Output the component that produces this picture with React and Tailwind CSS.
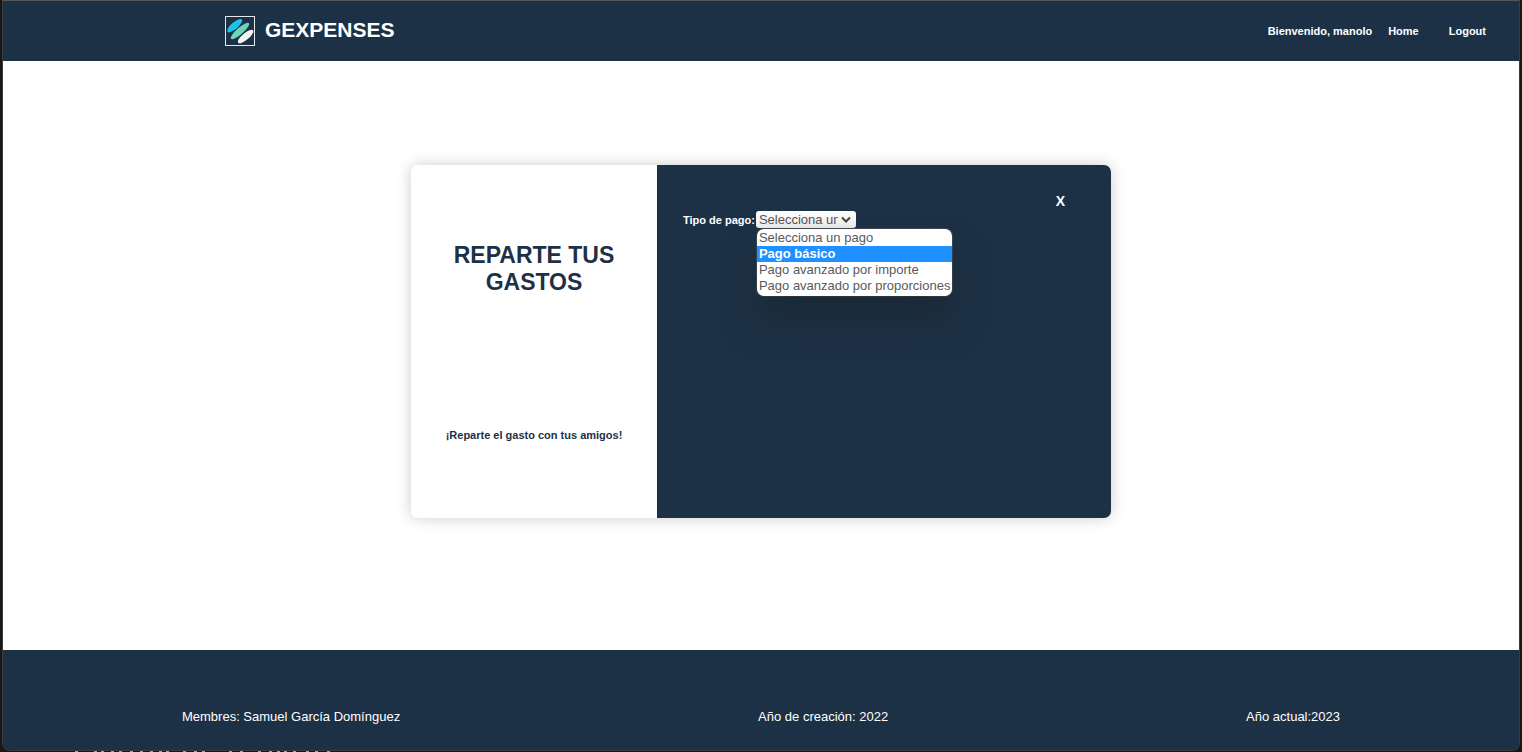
const options = [
  'Selecciona un pago',
  'Pago básico',
  'Pago avanzado por importe',
  'Pago avanzado por proporciones',
];

function Logo() {
  return (
    <svg width="30" height="30" viewBox="0 0 30 30" aria-hidden="true">
      <rect x="0.5" y="0.5" width="29" height="29" fill="none" stroke="#e3e8ec" />
      <ellipse cx="9.7" cy="9.6" rx="9.5" ry="3.3" fill="#1bc4ea" transform="rotate(-40 9.7 9.6)" />
      <ellipse cx="15" cy="15" rx="11.8" ry="3.3" fill="#6fd3b8" transform="rotate(-41 15 15)" />
      <ellipse cx="20.6" cy="20.5" rx="9.7" ry="3.3" fill="#f4f5f3" transform="rotate(-40 20.6 20.5)" />
    </svg>
  );
}

function Header() {
  return (
    <header className="flex h-[60px] items-center justify-between bg-[#1d3146] pr-[33px] pl-[222px] text-white">
      <a href="#" className="flex items-start gap-2.5">
        <Logo />
        <span className="text-[21px] leading-7 font-bold">GEXPENSES</span>
      </a>
      <nav className="flex items-center text-[11px] leading-4 font-bold">
        <span className="mr-4">Bienvenido, manolo</span>
        <a href="#" className="mr-[30px]">Home</a>
        <a href="#">Logout</a>
      </nav>
    </header>
  );
}

function PaymentSelect() {
  return (
    <div className="mt-0.5 flex items-center gap-px">
      <label htmlFor="tipo" className="text-[11px] leading-4 font-bold text-white">
        Tipo de pago:
      </label>
      <div className="relative flex">
        <select
          id="tipo"
          defaultValue={options[0]}
          className="h-[17px] w-[100px] appearance-none rounded-[3px] bg-linear-to-b from-white to-[#ededed] pr-[18px] pl-[3px] text-[13px] leading-[17px] text-[#555]"
        >
          {options.map((o) => (
            <option key={o}>{o}</option>
          ))}
        </select>
        <svg className="pointer-events-none absolute top-[5px] right-[5px]" width="10" height="8" viewBox="0 0 10 8" fill="none" aria-hidden="true">
          <path d="M1 1.5 5 5.5 9 1.5" stroke="#444" strokeWidth="2" />
        </svg>
        <ul
          role="listbox"
          aria-label="Tipo de pago"
          className="absolute top-[18px] left-px z-10 overflow-hidden rounded-[7px] bg-white pt-px pb-0.5 text-[13px] leading-4 whitespace-nowrap text-[#5a5a5a] shadow-[0_25px_35px_rgba(26,35,40,0.5),0_0_0_1px_#3d4750]"
        >
          {options.map((o, i) => (
            <li
              key={o}
              role="option"
              aria-selected={i === 1}
              className="px-0.5 aria-selected:bg-[#1e90ff] aria-selected:font-bold aria-selected:text-white"
            >
              {o}
            </li>
          ))}
        </ul>
      </div>
    </div>
  );
}

function Card() {
  return (
    <section className="flex min-h-[353px] w-full max-w-[700px] rounded-[7px] shadow-[0_0_15px_rgba(0,0,0,0.2)]">
      <div className="flex w-[246px] shrink-0 flex-col items-center justify-between rounded-l-[7px] bg-white px-8 pt-[77px] pb-[75px] text-center text-[#1d3146]">
        <h1 className="text-[23px] leading-[27px] font-bold">REPARTE TUS GASTOS</h1>
        <p className="text-[11px] leading-4 font-bold whitespace-nowrap">¡Reparte el gasto con tus amigos!</p>
      </div>
      <div className="flex flex-1 flex-col rounded-r-[7px] bg-[#1d3146] pt-7 pr-[46px] pl-[26px]">
        <button type="button" className="self-end text-sm leading-4 font-bold text-white">
          X
        </button>
        <PaymentSelect />
      </div>
    </section>
  );
}

function Footer() {
  return (
    <footer className="flex h-[100px] items-center justify-around bg-[#1d3146] pt-[34px] text-[13px] leading-4 text-white">
      <p>Membres: Samuel García Domínguez</p>
      <p>Año de creación: 2022</p>
      <p>Año actual:2023</p>
    </footer>
  );
}

function BackdropEdge() {
  return (
    <svg className="ml-[72px] h-px w-[260px]" viewBox="0 0 260 1" aria-hidden="true">
      <path
        d="M1 .5h3M20 .5h3M27 .5h3M37 .5h3M45 .5h3M56 .5h3M66 .5h3M76 .5h3M85 .5h3M92 .5h3M109 .5h3M120 .5h3M128 .5h3M155 .5h3M166 .5h3M184 .5h3M195 .5h3M203 .5h3M210 .5h3M219 .5h3M232 .5h3M241 .5h3M253 .5h3"
        stroke="#a5a5a5"
      />
    </svg>
  );
}

export default function App() {
  return (
    <div className="flex min-h-screen flex-col bg-[#171717] px-0.5 font-['Liberation_Sans',Arial,sans-serif]">
      <div className="flex flex-1 flex-col overflow-hidden rounded-b-lg border border-[#3c3c3c] border-t-[#555]">
        <Header />
        <main className="flex flex-1 items-start justify-center bg-white pt-[104px] pb-20">
          <Card />
        </main>
        <Footer />
      </div>
      <BackdropEdge />
    </div>
  );
}
